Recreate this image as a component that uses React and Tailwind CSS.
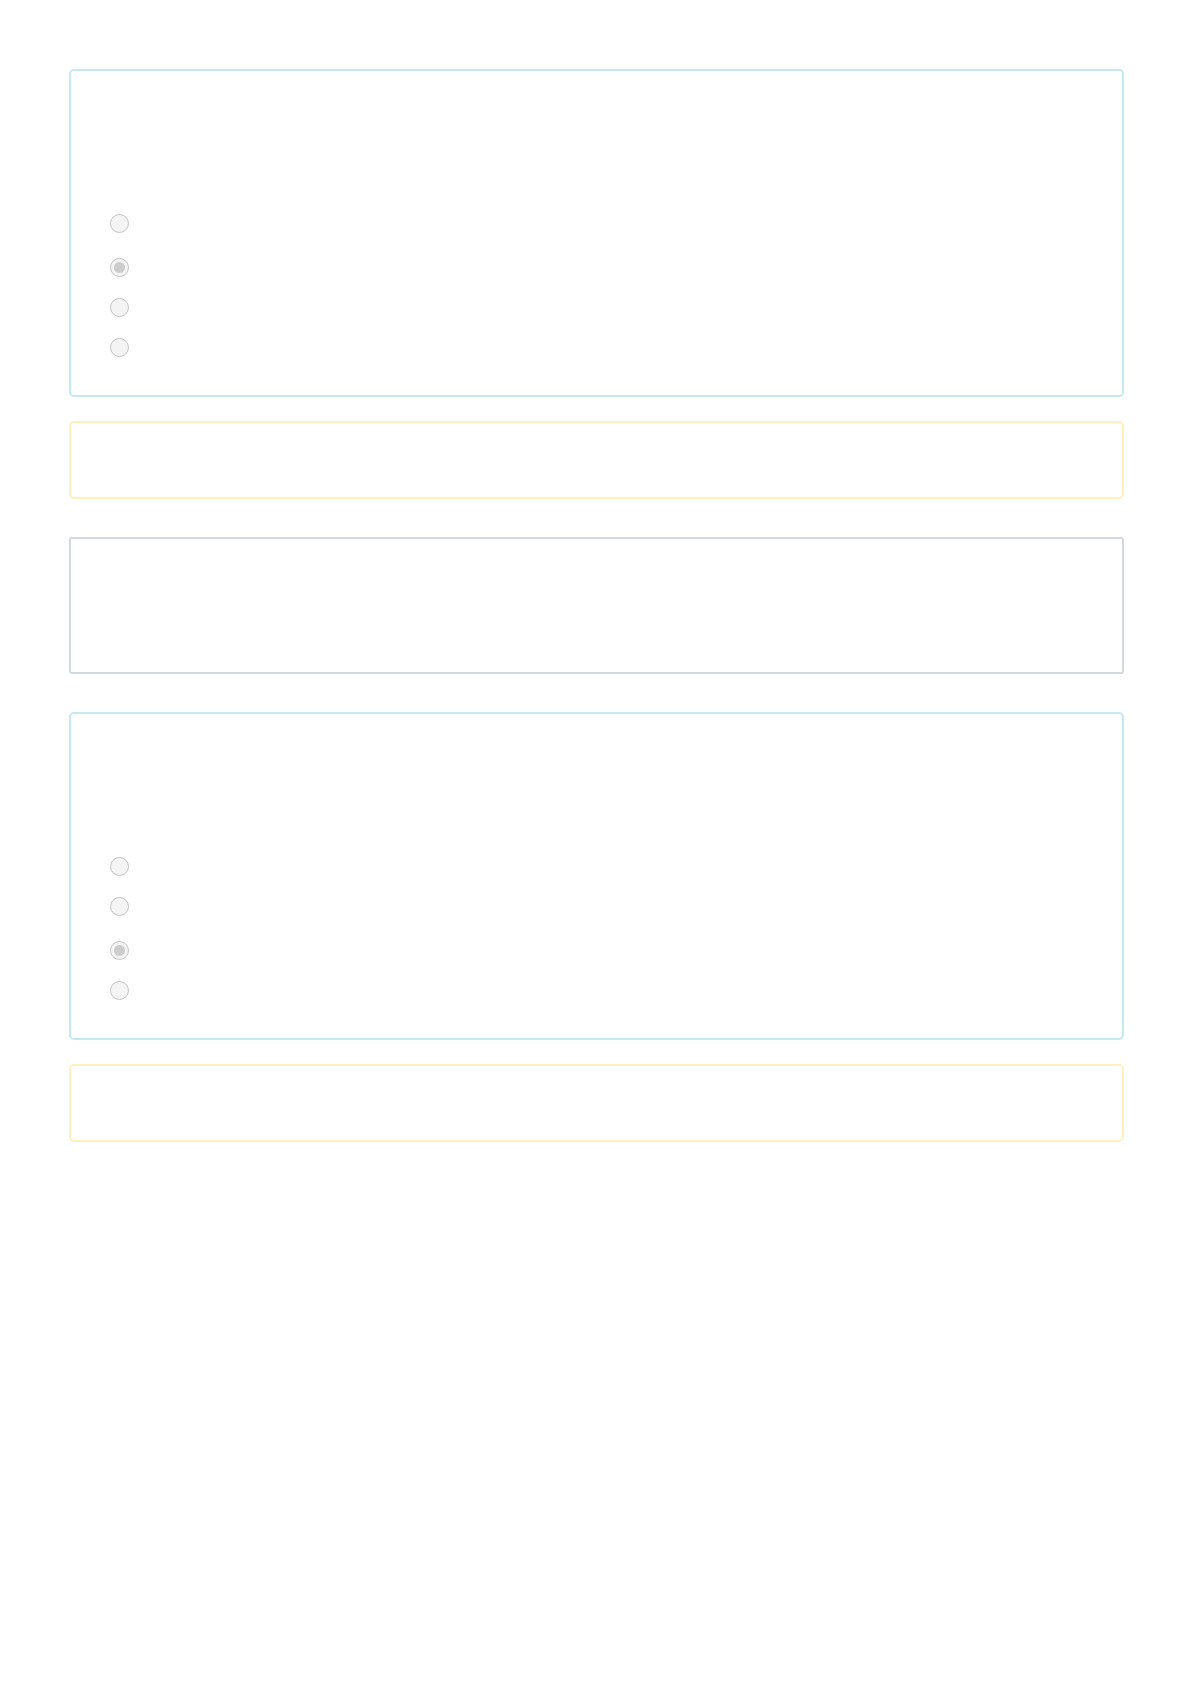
import React from "react";

const Radio = ({ checked }) => (
  <span className="flex h-[19px] w-[19px] items-center justify-center rounded-full border-[1.5px] border-[#c4c4c4] bg-[#f4f4f4]">
    {checked && <span className="h-[11px] w-[11px] rounded-full bg-[#cccccc]" />}
  </span>
);

function QuestionCard({ checkedIndex }) {
  return (
    <div className="rounded-[5px] border-2 border-[#c4eaf1] bg-white pt-[143px] pb-[38px] pl-[39px]">
      <ul>
        {[0, 1, 2, 3].map((i) => (
          <li
            key={i}
            className={`flex items-center ${i === 0 ? "" : i === checkedIndex ? "mt-[25px]" : "mt-[21px]"}`}
          >
            <Radio checked={i === checkedIndex} />
          </li>
        ))}
      </ul>
    </div>
  );
}

const Note = () => (
  <div className="h-[78px] rounded-[5px] border-2 border-[#fff0bd] bg-white" />
);

export default function App() {
  return (
    <div className="min-h-[1685px] bg-white font-['Liberation_Sans',sans-serif]">
      <div className="ml-[69px] w-[1055px] pt-[69px]">
        <QuestionCard checkedIndex={1} />
        <div className="mt-[24px]">
          <Note />
        </div>
        <div className="mt-[38px] h-[137px] rounded-[3px] border-2 border-[#d3d8df] bg-white" />
        <div className="mt-[38px]">
          <QuestionCard checkedIndex={2} />
        </div>
        <div className="mt-[24px]">
          <Note />
        </div>
      </div>
    </div>
  );
}
